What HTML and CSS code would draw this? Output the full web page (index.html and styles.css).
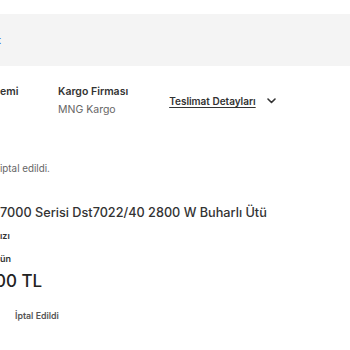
FILE: index.html
```html
<!DOCTYPE html>
<html lang="tr">
<head>
    <meta charset="UTF-8">
    <meta name="viewport" content="width=device-width, initial-scale=1.0">
    <title>Sipariş Detayı</title>
    <link rel="stylesheet" href="styles.css">
</head>
<body>

    <div class="order">
        <div class="info-bar">
            <span class="info-link">t</span>
        </div>

        <div class="delivery">
            <div class="delivery-col delivery-type">
                <div class="delivery-label">emi</div>
            </div>
            <div class="delivery-col">
                <div class="delivery-label">Kargo Firması</div>
                <div class="delivery-value">MNG Kargo</div>
            </div>
            <a class="delivery-toggle" href="#">
                <span class="toggle-text">Teslimat Detayları</span>
                <svg class="chevron" width="9" height="6" viewBox="0 0 9 6">
                    <path d="M1 1 L4.5 4.5 L8 1" fill="none" stroke="#333" stroke-width="1.6" stroke-linecap="round" stroke-linejoin="round"/>
                </svg>
            </a>
        </div>

        <p class="status-note">iptal edildi.</p>

        <div class="product">
            <h3 class="product-name">7000 Serisi Dst7022/40 2800 W Buharlı Ütü</h3>
            <div class="product-attr">ızı</div>
            <div class="product-attr product-attr-last">ün</div>
            <div class="product-price">00 TL</div>
            <div class="product-status">İptal Edildi</div>
        </div>
    </div>

</body>
</html>
```

FILE: styles.css
```css
body {
    font-family: Inter, "Noto Sans", sans-serif;
    background-color: #ffffff;
    color: #333333;
    margin: 0;
}

.order {
    padding-top: 14px;
}

.info-bar {
    background: #f4f4f4;
    height: 52px;
    display: flex;
    align-items: center;
}

.info-link {
    color: #3e6fd8;
    font-size: 11px;
    font-weight: 600;
    margin-left: -3px;
}

.delivery {
    display: flex;
    align-items: center;
    margin-top: 19px;
}

.delivery-col {
    display: flex;
    flex-direction: column;
    gap: 5px;
}

.delivery-type {
    width: 58px;
    align-self: flex-start;
}

.delivery-label {
    font-size: 10.5px;
    font-weight: 600;
    color: #333;
}

.delivery-value {
    font-size: 10.5px;
    color: #666;
}

.delivery-toggle {
    display: flex;
    align-items: center;
    gap: 11px;
    margin-left: 41px;
    color: #333;
    text-decoration: none;
    margin-top: 1px;
}

.toggle-text {
    font-size: 10px;
    font-weight: 600;
    text-decoration: underline;
    text-underline-offset: 2px;
}

.status-note {
    font-size: 9.8px;
    color: #666;
    margin: 47px 0 0;
}

.product {
    margin-top: 31px;
}

.product-name {
    font-size: 12.7px;
    font-weight: 500;
    margin: 0;
    color: #333;
}

.product-attr {
    font-size: 9px;
    font-weight: 600;
    color: #333;
    margin-top: 10px;
}

.product-attr-last {
    margin-top: 12px;
}

.product-price {
    font-size: 17px;
    font-weight: 500;
    color: #222;
    margin: 7px 0 0 -5px;
}

.product-status {
    font-size: 8.8px;
    font-weight: 600;
    color: #555;
    margin: 19px 0 0 15px;
}
```
